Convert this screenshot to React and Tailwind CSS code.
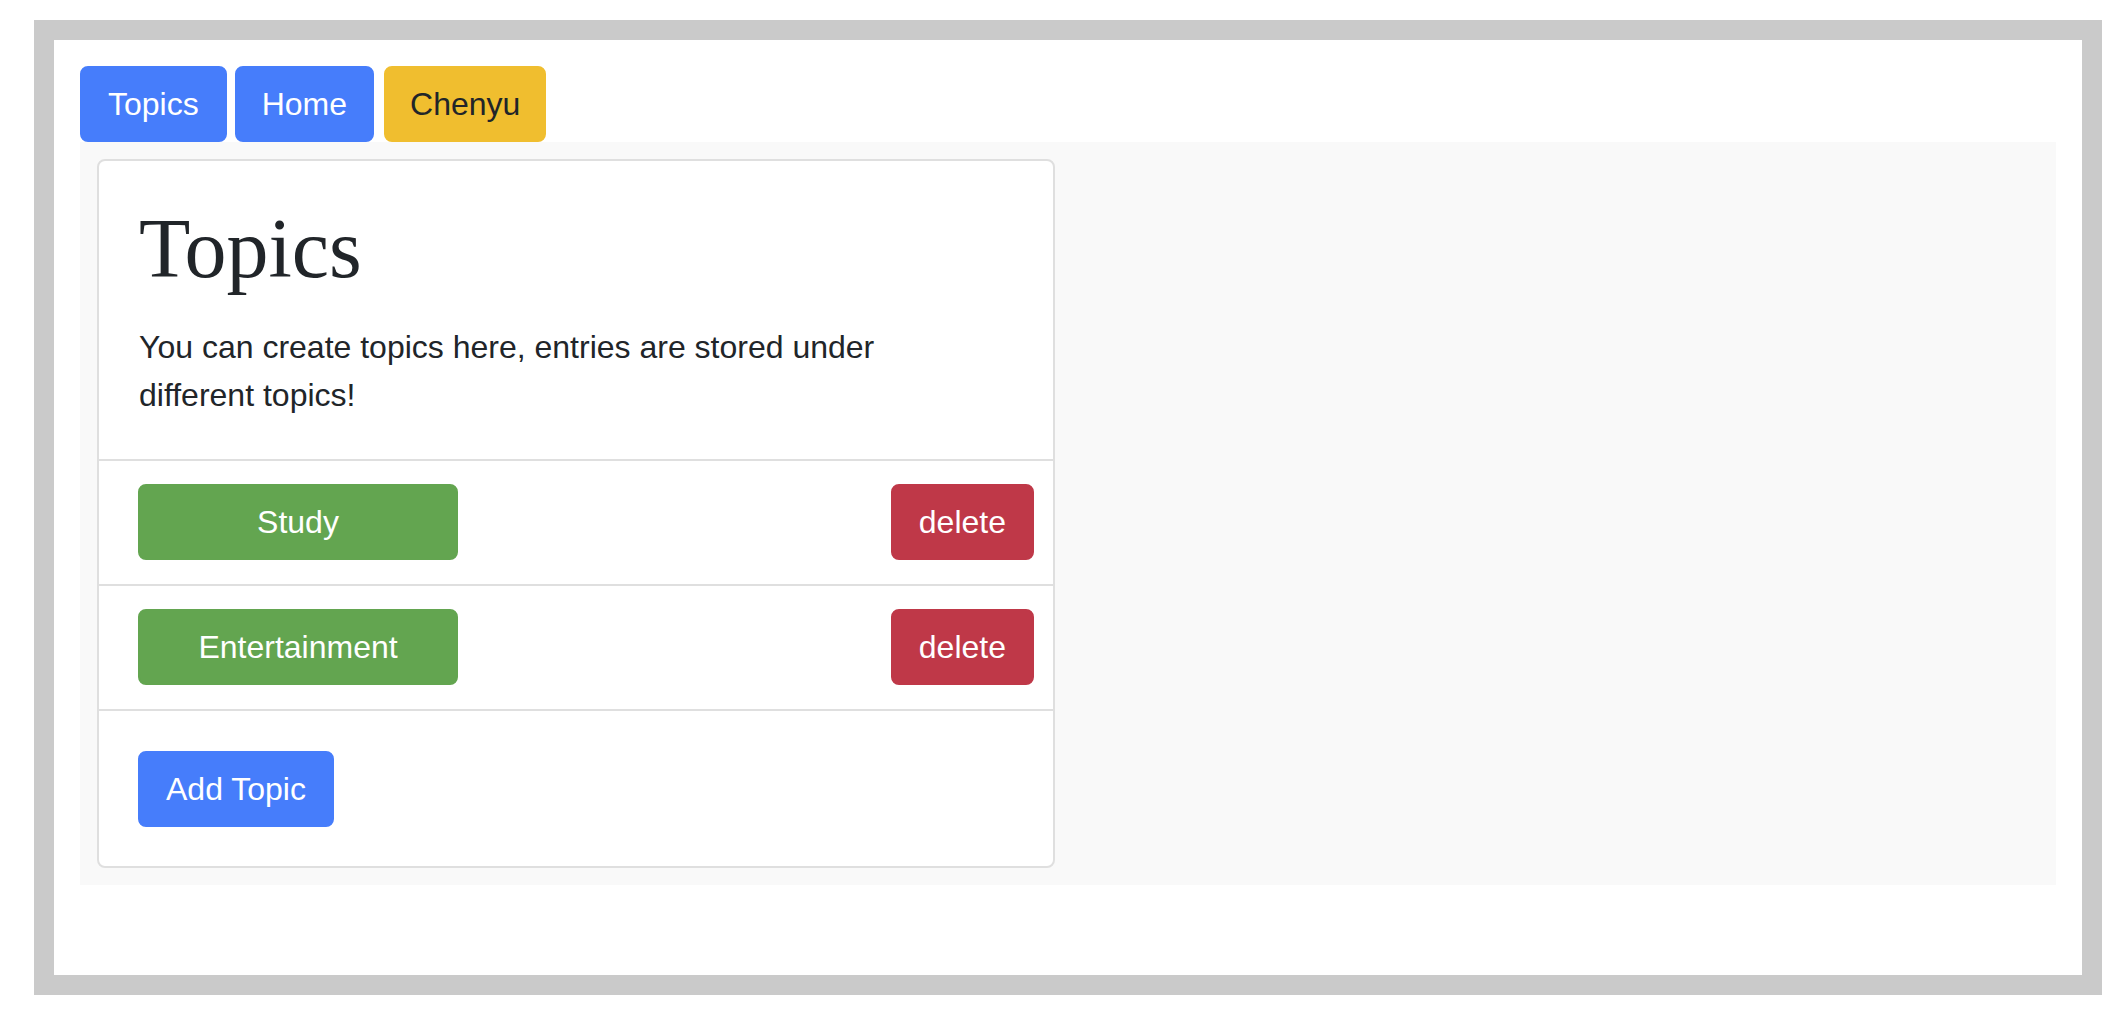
export default function App() {
    const topics = [
        { id: 1, name: 'Study' },
        { id: 2, name: 'Entertainment' },
    ];

    const btn = "inline-block py-[12px] border-2 text-[32px] leading-[48px] rounded-[8px]";

    return (
        <div className="min-h-screen bg-white pt-[20px] pl-[34px]" style={{ fontFamily: '"Liberation Sans", Arial, sans-serif' }}>
            <div className="w-[2068px] border-[20px] border-[#cacaca] bg-white">
                <div className="pt-[26px] px-[26px] pb-[90px]">
                    {/* Nav */}
                    <div className="flex">
                        <a href="#" className={`${btn} px-[26px] mr-[8px] bg-[#467dfb] border-[#467dfb] text-white`}>Topics</a>
                        <a href="#" className={`${btn} px-[25px] mr-[10px] bg-[#467dfb] border-[#467dfb] text-white`}>Home</a>
                        <a href="#" className={`${btn} px-[24px] bg-[#f0be2f] border-[#f0be2f] text-[#212529]`}>Chenyu</a>
                    </div>

                    {/* Panel */}
                    <div className="bg-[#f9f9f9] p-[17px]">
                        <div className="w-[958px] bg-white border-2 border-[#dfdfdf] rounded-[8px] overflow-hidden">
                            <div className="pt-[40px] px-[40px] pb-[40px]">
                                <h1 className="text-[84px] leading-[96px] text-[#212529]" style={{ fontFamily: '"Liberation Serif", "Times New Roman", serif' }}>
                                    Topics
                                </h1>
                                <p className="mt-[26px] w-[780px] text-[32px] leading-[48px] text-[#212529]">
                                    You can create topics here, entries are stored under different topics!
                                </p>
                            </div>

                            {topics.map(topic => (
                                <div key={topic.id} className="flex justify-between items-center border-t-2 border-[#dfdfdf] pt-[23px] pb-[24px] pl-[39px] pr-[19px]">
                                    <button className={`${btn} px-[26px] w-[320px] text-center bg-[#63a550] border-[#63a550] text-white`}>
                                        {topic.name}
                                    </button>
                                    <button className={`${btn} px-[26px] bg-[#bf3848] border-[#bf3848] text-white`}>
                                        delete
                                    </button>
                                </div>
                            ))}

                            <div className="border-t-2 border-[#dfdfdf] pt-[40px] pb-[39px] pl-[39px]">
                                <button className={`${btn} px-[26px] bg-[#467dfb] border-[#467dfb] text-white`}>
                                    Add Topic
                                </button>
                            </div>
                        </div>
                    </div>
                </div>
            </div>
        </div>
    );
}
